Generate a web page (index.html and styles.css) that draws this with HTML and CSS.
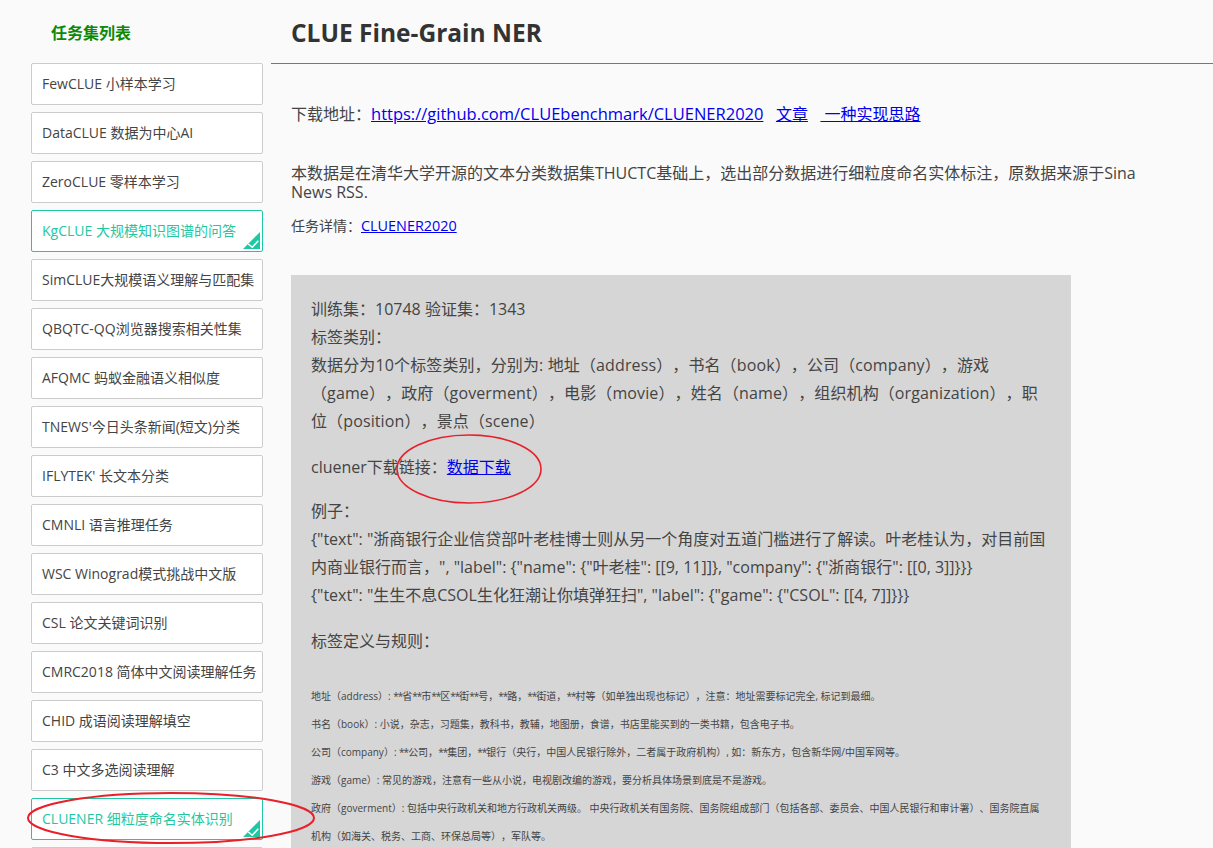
FILE: index.html
```html
<!DOCTYPE html>
<html lang="zh">
<head>
    <meta charset="UTF-8">
    <title>CLUE Fine-Grain NER</title>
    <link rel="stylesheet" href="styles.css">
</head>
<body>

<div class="page">
    <div class="sidebar">
        <h3 class="side-title">任务集列表</h3>
        <a class="task">FewCLUE 小样本学习</a>
        <a class="task">DataCLUE 数据为中心AI</a>
        <a class="task">ZeroCLUE 零样本学习</a>
        <a class="task active">KgCLUE 大规模知识图谱的问答
            <svg class="tick" width="18" height="18" viewBox="0 0 18 18"><path d="M0 17 L17 0 V17 Z" fill="#1fc8a2"/><path d="M5.3 12 L9.3 15.3 L15.3 8.7" fill="none" stroke="#fff" stroke-width="1.5"/></svg>
        </a>
        <a class="task">SimCLUE大规模语义理解与匹配集</a>
        <a class="task">QBQTC-QQ浏览器搜索相关性集</a>
        <a class="task">AFQMC 蚂蚁金融语义相似度</a>
        <a class="task">TNEWS'今日头条新闻(短文)分类</a>
        <a class="task">IFLYTEK' 长文本分类</a>
        <a class="task">CMNLI 语言推理任务</a>
        <a class="task">WSC Winograd模式挑战中文版</a>
        <a class="task">CSL 论文关键词识别</a>
        <a class="task">CMRC2018 简体中文阅读理解任务</a>
        <a class="task">CHID 成语阅读理解填空</a>
        <a class="task">C3 中文多选阅读理解</a>
        <a class="task active">CLUENER 细粒度命名实体识别
            <svg class="tick" width="18" height="18" viewBox="0 0 18 18"><path d="M0 17 L17 0 V17 Z" fill="#1fc8a2"/><path d="M5.3 12 L9.3 15.3 L15.3 8.7" fill="none" stroke="#fff" stroke-width="1.5"/></svg>
        </a>
        <a class="task"></a>
    </div>

    <div class="main">
        <div class="head">
            <h1>CLUE Fine-Grain NER</h1>
        </div>
        <div class="content">
            <p class="links">下载地址：<a class="url" href="#">https://github.com/CLUEbenchmark/CLUENER2020</a>&nbsp;&nbsp;&nbsp;<a href="#">文章</a>&nbsp;&nbsp; <a href="#">&nbsp;一种实现思路</a></p>
            <p class="intro">本数据是在清华大学开源的文本分类数据集THUCTC基础上，选出部分数据进行细粒度命名实体标注，原数据来源于Sina News RSS.</p>
            <p class="detail">任务详情：<a class="url" href="#">CLUENER2020</a></p>

            <div class="box">
                <p>训练集：10748 验证集：1343<br>
                标签类别：<br>
                <span class="labels">数据分为10个标签类别，分别为: 地址（address），书名（book），公司（company），游戏<br>（game），政府（goverment），电影（movie），姓名（name），组织机构（organization），职<br>位（position），景点（scene）</span></p>
                <p class="download">cluener下载链接：<a href="#">数据下载</a></p>
                <p>例子：<br>
                {"text": "浙商银行企业信贷部叶老桂博士则从另一个角度对五道门槛进行了解读。叶老桂认为，对目前国内商业银行而言，", "label": {"name": {"叶老桂": [[9, 11]]}, "company": {"浙商银行": [[0, 3]]}}}<br>
                {"text": "生生不息CSOL生化狂潮让你填弹狂扫", "label": {"game": {"CSOL": [[4, 7]]}}}</p>
                <p>标签定义与规则：</p>
                <div class="rules">
                    地址（address）: <span class="stars">**</span>省<span class="stars">**</span>市<span class="stars">**</span>区<span class="stars">**</span>街<span class="stars">**</span>号，<span class="stars">**</span>路，<span class="stars">**</span>街道，<span class="stars">**</span>村等（如单独出现也标记），注意：地址需要标记完全, 标记到最细。<br>
                    书名（book）: 小说，杂志，习题集，教科书，教辅，地图册，食谱，书店里能买到的一类书籍，包含电子书。<br>
                    公司（company）: <span class="stars">**</span>公司，<span class="stars">**</span>集团，<span class="stars">**</span>银行（央行，中国人民银行除外，二者属于政府机构）, 如：新东方，包含新华网/中国军网等。<br>
                    游戏（game）: 常见的游戏，注意有一些从小说，电视剧改编的游戏，要分析具体场景到底是不是游戏。<br>
                    政府（goverment）: 包括中央行政机关和地方行政机关两级。 中央行政机关有国务院、国务院组成部门（包括各部、委员会、中国人民银行和审计署）、国务院直属<br>机构（如海关、税务、工商、环保总局等），军队等。
                </div>
            </div>
        </div>
    </div>

    <svg class="mark mark-link" width="148" height="72" viewBox="0 0 148 72"><ellipse cx="74" cy="36" rx="72" ry="34" fill="none" stroke="#e8202a" stroke-width="1.6"/></svg>
    <svg class="mark mark-task" width="292" height="56" viewBox="0 0 292 56"><ellipse cx="146" cy="28" rx="143" ry="25" fill="none" stroke="#e8202a" stroke-width="2"/></svg>
</div>

</body>
</html>
```

FILE: styles.css
```css
html, body {
    margin: 0;
    height: 848px;
    overflow: hidden;
}
body {
    font-family: "Open Sans", "Noto Sans CJK SC", sans-serif;
    background-color: #fafafa;
    color: #444;
    text-spacing-trim: space-all;
}
.page {
    position: relative;
    display: flex;
    height: 848px;
    overflow: hidden;
}
.sidebar {
    width: 232px;
    flex-shrink: 0;
    margin-left: 31px;
    margin-right: 8px;
}
.side-title {
    margin: 0;
    height: 63px;
    padding-left: 20px;
    font-size: 16px;
    line-height: 66px;
    font-weight: bold;
    color: #0a8a0a;
    box-sizing: border-box;
}
.task {
    position: relative;
    display: block;
    box-sizing: border-box;
    height: 42px;
    margin-bottom: 7px;
    padding-left: 10px;
    border: 1px solid #ccc;
    border-radius: 2px;
    background-color: #fff;
    font-size: 14px;
    line-height: 40px;
    white-space: nowrap;
    color: #444;
}
.task.active {
    border-color: #1fc8a2;
    color: #1fc8a2;
}
.tick {
    position: absolute;
    right: 1px;
    bottom: 1px;
}
.main {
    flex: 1;
    min-width: 0;
}
.head {
    height: 64px;
    box-sizing: border-box;
    border-bottom: 1px solid #777;
    padding-left: 20px;
}
h1 {
    margin: 0;
    font-size: 24.5px;
    line-height: 66px;
    font-weight: bold;
    color: #333;
}
.content {
    padding-left: 20px;
    width: 860px;
}
.content a {
    color: #00e;
    text-decoration: underline;
}
.links {
    margin: 38px 0 0;
    font-size: 16px;
    line-height: 24px;
}
.links .url {
    font-size: 16.5px;
}
.intro {
    margin: 38px 0 0;
    font-size: 16px;
    line-height: 19px;
}
.detail {
    margin: 14px 0 0;
    font-size: 14px;
    line-height: 20px;
}
.detail .url {
    font-size: 14.4px;
}
.box {
    width: 780px;
    margin-top: 39px;
    padding: 20px 20px 0;
    box-sizing: border-box;
    background-color: #d6d6d6;
    font-size: 16px;
    line-height: 28px;
}
.box p {
    margin: 0 0 18px;
}
.box .download {
    margin-bottom: 16px;
}
.labels {
    letter-spacing: 0.12px;
}
.rules {
    margin-top: 27px;
    font-size: 10px;
    line-height: 28px;
    white-space: nowrap;
}
.stars {
    letter-spacing: -1px;
}
.mark {
    position: absolute;
}
.mark-link {
    left: 395px;
    top: 433px;
}
.mark-task {
    left: 25px;
    top: 790px;
}
```
